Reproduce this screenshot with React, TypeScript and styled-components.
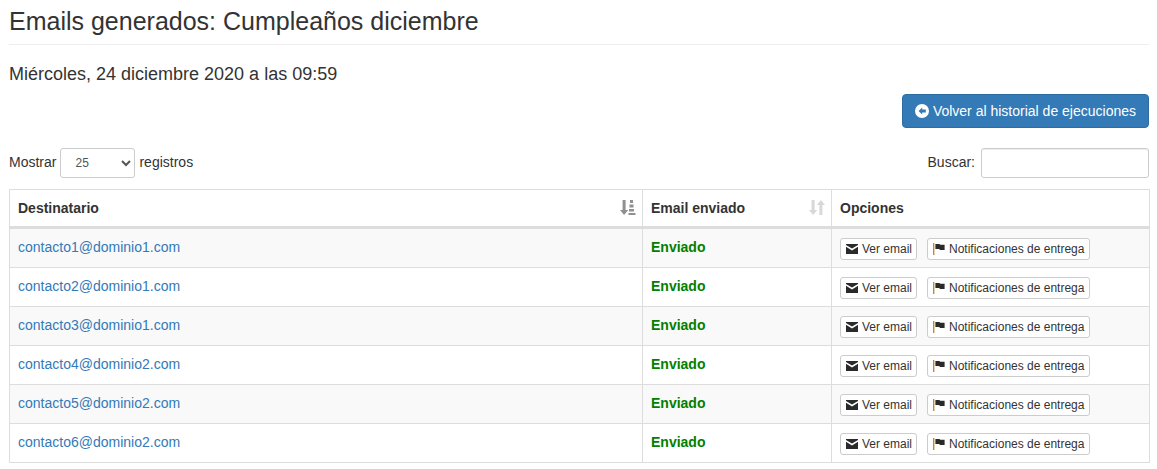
import styled, { createGlobalStyle } from "styled-components";

const GlobalStyle = createGlobalStyle`
    html, body {
        margin: 0;
        padding: 0;
        background: #fff;
    }
    body {
        font-family: "Liberation Sans", Arial, sans-serif;
        font-size: 14px;
        line-height: 20px;
        color: #333;
    }
`;

const recipients = [
    "contacto1@dominio1.com",
    "contacto2@dominio1.com",
    "contacto3@dominio1.com",
    "contacto4@dominio2.com",
    "contacto5@dominio2.com",
    "contacto6@dominio2.com",
];

const SortIcon = ({ active }: { active?: boolean }) => (
    <svg width="16" height="16" viewBox="0 0 16 16" fill={active ? "#909090" : "#d8d8d8"}>
        <path d="M2.6 0h3v10h2.6L4.1 15 0 10h2.6z" />
        {active ? (
            <>
                <rect x="10" y="0" width="3" height="3" />
                <rect x="9.5" y="4.5" width="4" height="3" />
                <rect x="9" y="9" width="5" height="2.5" />
                <rect x="8.5" y="13" width="7" height="2" />
            </>
        ) : (
            <path d="M10.4 15h3V5H16L11.9 0 7.8 5h2.6z" />
        )}
    </svg>
);

const BackIcon = () => (
    <svg width="14" height="14" viewBox="0 0 14 14">
        <circle cx="7" cy="7" r="7" fill="#fff" />
        <path d="M7.2 3.4 3.6 7l3.6 3.6V8.4h3.6V5.6H7.2z" fill="#337ab7" />
    </svg>
);

const EnvelopeIcon = () => (
    <svg width="12" height="10" viewBox="0 0 12 10">
        <path d="M0 0h12v1L6 4.6 0 1z" fill="#2a2a2a" />
        <path d="M0 2.8V10h12V2.8L6 6.4z" fill="#2a2a2a" />
    </svg>
);

const FlagIcon = () => (
    <svg width="12" height="12" viewBox="0 0 12 12">
        <rect x="0" y="0" width="1.4" height="12" fill="#c8892e" />
        <path d="M2.4 1h4l.8.8H11.6V7H7l-.8-.9H2.4z" fill="#2a2a2a" />
    </svg>
);

const App = () => (
    <Page>
        <GlobalStyle />
        <Header>
            <Title>Emails generados: Cumpleaños diciembre</Title>
        </Header>
        <DateLine>Miércoles, 24 diciembre 2020 a las 09:59</DateLine>
        <Actions>
            <PrimaryButton>
                <BackIcon />
                Volver al historial de ejecuciones
            </PrimaryButton>
        </Actions>
        <Controls>
            <ControlLabel>
                <Caption>Mostrar</Caption>
                <PageSize defaultValue="25">
                    <option value="10">10</option>
                    <option value="25">25</option>
                    <option value="50">50</option>
                </PageSize>
                <Caption>registros</Caption>
            </ControlLabel>
            <ControlLabel>
                <Caption>Buscar:</Caption>
                <SearchInput />
            </ControlLabel>
        </Controls>
        <Table>
            <colgroup>
                <col width="633" />
                <col width="189" />
                <col width="318" />
            </colgroup>
            <thead>
                <tr>
                    <HeadCell>
                        <HeadInner>
                            Destinatario
                            <SortIcon active />
                        </HeadInner>
                    </HeadCell>
                    <HeadCell>
                        <HeadInner>
                            Email enviado
                            <SortIcon />
                        </HeadInner>
                    </HeadCell>
                    <HeadCell>Opciones</HeadCell>
                </tr>
            </thead>
            <tbody>
                {recipients.map((email) => (
                    <Row key={email}>
                        <Cell>
                            <EmailLink href="#">{email}</EmailLink>
                        </Cell>
                        <Cell>
                            <Status>Enviado</Status>
                        </Cell>
                        <Cell>
                            <RowActions>
                                <SmallButton $tight>
                                    <EnvelopeIcon />
                                    Ver email
                                </SmallButton>
                                <SmallButton>
                                    <FlagIcon />
                                    Notificaciones de entrega
                                </SmallButton>
                            </RowActions>
                        </Cell>
                    </Row>
                ))}
            </tbody>
        </Table>
    </Page>
);

const Page = styled.div`
    padding: 0 8px 0 9px;
`;

const Header = styled.div`
    height: 44px;
    border-bottom: 1px solid #eee;
    box-sizing: content-box;
`;

const Title = styled.h1`
    margin: 0;
    padding-top: 8px;
    font-size: 25px;
    font-weight: 400;
    line-height: 26px;
`;

const DateLine = styled.p`
    margin: 0;
    padding-top: 19px;
    font-size: 18px;
    line-height: 20px;
`;

const Actions = styled.div`
    display: flex;
    justify-content: flex-end;
    margin-top: 10px;
`;

const PrimaryButton = styled.button`
    display: flex;
    align-items: center;
    gap: 4px;
    height: 34px;
    padding: 0 12px;
    border: 1px solid #2e6da4;
    border-radius: 4px;
    background: #337ab7;
    color: #fff;
    font: inherit;
`;

const Controls = styled.div`
    display: flex;
    justify-content: space-between;
    align-items: center;
    margin-top: 20px;
    height: 30px;
`;

const ControlLabel = styled.label`
    display: flex;
    align-items: center;
    gap: 4px;
    font-size: 14px;
    line-height: 18px;
`;

const Caption = styled.span`
    margin-bottom: 2px;
`;

const PageSize = styled.select`
    box-sizing: border-box;
    width: 75px;
    height: 30px;
    padding: 0 5px 0 10px;
    border: 1px solid #ccc;
    border-radius: 3px;
    background: #fff;
    color: #555;
    font: 12px "Liberation Sans", Arial, sans-serif;
`;

const SearchInput = styled.input`
    box-sizing: border-box;
    width: 168px;
    height: 30px;
    margin-left: 2px;
    padding: 5px 10px;
    border: 1px solid #ccc;
    border-radius: 3px;
    box-shadow: inset 0 1px 1px rgba(0, 0, 0, 0.075);
`;

const Table = styled.table`
    box-sizing: border-box;
    width: 1140px;
    margin-top: 11px;
    border: 1px solid #ddd;
    border-collapse: collapse;
    table-layout: fixed;
`;

const HeadCell = styled.th`
    box-sizing: border-box;
    height: 38px;
    padding: 0 8px;
    border: 1px solid #ddd;
    border-bottom: 3px solid #ddd;
    font-weight: 700;
    text-align: left;
`;

const HeadInner = styled.div`
    display: flex;
    justify-content: space-between;
    align-items: center;
    margin-right: -2px;
`;

const Row = styled.tr`
    &:nth-child(odd) {
        background: #f9f9f9;
    }
    &:first-child td {
        height: 40px;
    }
`;

const Cell = styled.td`
    box-sizing: border-box;
    height: 39px;
    padding: 8px 8px 0;
    border: 1px solid #ddd;
    vertical-align: top;
`;

const RowActions = styled.div`
    display: flex;
    gap: 10px;
    margin-top: 1px;
`;

const EmailLink = styled.a`
    color: #337ab7;
    text-decoration: none;
`;

const Status = styled.span`
    color: #008000;
    font-weight: 700;
`;

const SmallButton = styled.button<{ $tight?: boolean }>`
    display: inline-flex;
    align-items: center;
    gap: 4px;
    box-sizing: border-box;
    height: 22px;
    padding: 0 ${(p) => (p.$tight ? "4px" : "5px")} 0 5px;
    border: 1px solid #ccc;
    border-radius: 3px;
    background: #fff;
    color: #333;
    font: 12px/18px "Liberation Sans", Arial, sans-serif;
`;

export default App;
